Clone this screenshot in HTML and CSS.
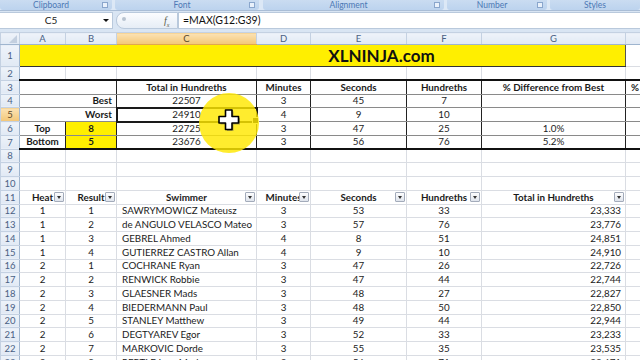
FILE: index.html
```html
<!DOCTYPE html>
<html>
<head>
<meta charset="utf-8">
<link rel="stylesheet" href="styles.css">
</head>
<body>
<div class="ribbon">
  <div class="group g-clip"><span>Clipboard</span><i class="launch"></i></div>
  <div class="group g-font"><span>Font</span><i class="launch"></i></div>
  <div class="group g-align"><span>Alignment</span><i class="launch"></i></div>
  <div class="group g-num"><span>Number</span><i class="launch"></i></div>
  <div class="group g-styles"><span>Styles</span></div>
</div>

<div class="formulabar">
  <div class="namebox"><span>C5</span><b class="caret"></b></div>
  <div class="fxbox"><i class="knob"></i><span class="fx">f<sub>x</sub></span></div>
  <div class="formula">=MAX(G12:G39)</div>
</div>

<div class="sheet">
  <table class="grid">
    <colgroup>
      <col class="w-rh"><col class="w-a"><col class="w-b"><col class="w-c"><col class="w-d">
      <col class="w-e"><col class="w-f"><col class="w-g"><col class="w-h">
    </colgroup>
    <tr class="colhead">
      <th class="corner"></th><th>A</th><th>B</th><th class="on">C</th><th>D</th><th>E</th><th>F</th><th>G</th><th>H</th>
    </tr>
    <tr class="r1">
      <th>1</th><td colspan="7" class="title">XLNINJA.com</td><td></td>
    </tr>
    <tr><th>2</th><td></td><td></td><td></td><td></td><td></td><td></td><td></td><td></td></tr>
    <tr class="box top">
      <th>3</th><td colspan="2"></td><td class="b">Total in Hundreths</td><td class="b">Minutes</td><td class="b">Seconds</td><td class="b">Hundreths</td><td class="b">% Difference from Best</td><td class="b l">% Diff</td>
    </tr>
    <tr class="box">
      <th>4</th><td colspan="2" class="b r">Best</td><td>22507</td><td>3</td><td>45</td><td>7</td><td></td><td></td>
    </tr>
    <tr class="box">
      <th class="on">5</th><td colspan="2" class="b r">Worst</td><td class="sel">24910</td><td>4</td><td>9</td><td>10</td><td></td><td></td>
    </tr>
    <tr class="box">
      <th>6</th><td class="b">Top</td><td class="b yel">8</td><td>22725</td><td>3</td><td>47</td><td>25</td><td>1.0%</td><td></td>
    </tr>
    <tr class="box bottom">
      <th>7</th><td class="b">Bottom</td><td class="b yel">5</td><td>23676</td><td>3</td><td>56</td><td>76</td><td>5.2%</td><td></td>
    </tr>
    <tr><th>8</th><td></td><td></td><td></td><td></td><td></td><td></td><td></td><td></td></tr>
    <tr><th>9</th><td></td><td></td><td></td><td></td><td></td><td></td><td></td><td></td></tr>
    <tr><th>10</th><td></td><td></td><td></td><td></td><td></td><td></td><td></td><td></td></tr>
    <tr class="list-head">
      <th>11</th>
      <td>Heat<span class="fb"></span></td>
      <td>Result<span class="fb"></span></td>
      <td>Swimmer<span class="fb"></span></td>
      <td>Minutes<span class="fb"></span></td>
      <td>Seconds<span class="fb"></span></td>
      <td>Hundreths<span class="fb"></span></td>
      <td>Total in Hundreths<span class="fb"></span></td>
      <td></td>
    </tr>
    <tr class="list"><th>12</th><td>1</td><td>1</td><td class="l">SAWRYMOWICZ Mateusz</td><td>3</td><td>53</td><td>33</td><td class="r">23,333</td><td></td></tr>
    <tr class="list"><th>13</th><td>1</td><td>2</td><td class="l">de ANGULO VELASCO Mateo</td><td>3</td><td>57</td><td>76</td><td class="r">23,776</td><td></td></tr>
    <tr class="list"><th>14</th><td>1</td><td>3</td><td class="l">GEBREL Ahmed</td><td>4</td><td>8</td><td>51</td><td class="r">24,851</td><td></td></tr>
    <tr class="list"><th>15</th><td>1</td><td>4</td><td class="l">GUTIERREZ CASTRO Allan</td><td>4</td><td>9</td><td>10</td><td class="r">24,910</td><td></td></tr>
    <tr class="list"><th>16</th><td>2</td><td>1</td><td class="l">COCHRANE Ryan</td><td>3</td><td>47</td><td>26</td><td class="r">22,726</td><td></td></tr>
    <tr class="list"><th>17</th><td>2</td><td>2</td><td class="l">RENWICK Robbie</td><td>3</td><td>47</td><td>44</td><td class="r">22,744</td><td></td></tr>
    <tr class="list"><th>18</th><td>2</td><td>3</td><td class="l">GLAESNER Mads</td><td>3</td><td>48</td><td>27</td><td class="r">22,827</td><td></td></tr>
    <tr class="list"><th>19</th><td>2</td><td>4</td><td class="l">BIEDERMANN Paul</td><td>3</td><td>48</td><td>50</td><td class="r">22,850</td><td></td></tr>
    <tr class="list"><th>20</th><td>2</td><td>5</td><td class="l">STANLEY Matthew</td><td>3</td><td>49</td><td>44</td><td class="r">22,944</td><td></td></tr>
    <tr class="list"><th>21</th><td>2</td><td>6</td><td class="l">DEGTYAREV Egor</td><td>3</td><td>52</td><td>33</td><td class="r">23,233</td><td></td></tr>
    <tr class="list"><th>22</th><td>2</td><td>7</td><td class="l">MARKOVIC Dorde</td><td>3</td><td>55</td><td>35</td><td class="r">23,535</td><td></td></tr>
    <tr class="list"><th>23</th><td>2</td><td>8</td><td class="l">PERTLE Ivan Marko</td><td>3</td><td>56</td><td>71</td><td class="r">23,671</td><td></td></tr>
  </table>

  <div class="spot"></div>
  <svg class="cursor" width="24" height="24" viewBox="0 0 24 24">
    <path d="M9 2.5H15.5V9H22V15.5H15.5V22H9V15.5H2.5V9H9Z" fill="#555" opacity="0.45"/>
    <path d="M7.5 1H14V7.5H20.5V14H14V20.5H7.5V14H1V7.5H7.5Z" fill="#fff" stroke="#000" stroke-width="1.6" stroke-linejoin="round"/>
  </svg>
</div>
</body>
</html>
```

FILE: styles.css
```css
*{
  margin:0;
  padding:0;
  box-sizing:border-box;
}

body{
  width:640px;
  height:360px;
  overflow:hidden;
  background:#fff;
  font-family:Lato, "Open Sans", sans-serif;
  color:#1b1b1b;
}

/* ribbon group captions (bottom edge of the ribbon) */
.ribbon{
  display:flex;
  gap:3px;
  height:10px;
  background:#dce8f6;
  overflow:hidden;
}
.group{
  position:relative;
  height:10px;
  background:linear-gradient(#cadcf1, #bcd3ee);
  border-radius:0 0 3px 3px;
  color:#4c78b5;
  font-size:8.5px;
  line-height:10px;
  text-align:center;
  padding-right:10px;
}
.g-clip{ width:112px; }
.g-font{ width:144px; }
.g-align{ width:181px; margin-left:1px; }
.g-num{ width:100px; }
.g-styles{ flex:1; padding-right:0; }
.launch{
  position:absolute;
  right:4px;
  top:2px;
  width:6px;
  height:6px;
  border:1px solid #8aa6cc;
  background:#e9f1fb;
}

/* name box + formula bar */
.formulabar{
  display:flex;
  height:22px;
  padding:1px 0 3px;
  background:#d9e5f3;
  border-top:1px solid #a9bdd6;
}
.namebox{
  position:relative;
  width:113px;
  background:#fff;
  border:1px solid #b9c9dc;
  border-left:none;
  font-size:10px;
  line-height:15px;
  padding-right:10px;
  text-align:center;
}
.caret{
  position:absolute;
  right:3px;
  top:6px;
  border-left:3px solid transparent;
  border-right:3px solid transparent;
  border-top:3px solid #111;
}
.fxbox{
  position:relative;
  width:62px;
  margin-left:3px;
  background:linear-gradient(#fbfcfe, #e6edf6);
  border:1px solid #b9c9dc;
  border-radius:8px 0 0 8px;
}
.knob{
  position:absolute;
  left:5px;
  top:4px;
  width:4px;
  height:4px;
  border-radius:50%;
  background:#b8c3d0;
}
.fx{
  position:absolute;
  left:47px;
  top:0;
  font-family:"Liberation Serif", serif;
  font-style:italic;
  font-size:10px;
  line-height:15px;
  color:#5b5b4a;
}
.fx sub{
  font-size:6px;
}
.formula{
  flex:1;
  background:#fff;
  border:1px solid #b9c9dc;
  border-right:none;
  padding-left:4px;
  font-size:10.5px;
  line-height:15px;
  color:#111;
}

/* worksheet */
.sheet{
  position:relative;
  width:640px;
  overflow:hidden;
}
.grid{
  border-collapse:collapse;
  table-layout:fixed;
  width:776px;
  font-size:9.8px;
}
.w-rh{ width:19px; }
.w-a{ width:46px; }
.w-b{ width:51px; }
.w-c{ width:140px; }
.w-d{ width:54px; }
.w-e{ width:96px; }
.w-f{ width:75px; }
.w-g{ width:144px; }
.w-h{ width:151px; }

.grid tr{
  height:13.75px;
}
.grid td{
  border:1px solid #dadde3;
  padding:0 2px;
  text-align:center;
  line-height:11px;
  white-space:nowrap;
  overflow:hidden;
}
.grid th{
  background:linear-gradient(#eef3fa, #e1e9f4);
  border:1px solid #c4d1e2;
  border-right-color:#9fb5cf;
  color:#4a6184;
  font-weight:normal;
  font-size:9.5px;
  line-height:11px;
  text-align:center;
}
.grid th.on{
  background:linear-gradient(#fbe2b4, #f3c778);
  color:#5c4a2a;
}

.colhead{
  height:12px !important;
}
.colhead th{
  border-bottom-color:#9fb5cf;
  border-right-color:#c4d1e2;
}
.colhead th.on{
  border-bottom-color:#e0a850;
}
.corner{
  position:relative;
}
.corner::after{
  content:"";
  position:absolute;
  right:2px;
  bottom:1px;
  border-left:8px solid transparent;
  border-bottom:8px solid #c3cfdf;
}

.r1{
  height:22px !important;
}
.title{
  background:#ffef00;
  border-bottom:1px solid #333 !important;
  border-right:1px solid #555 !important;
  font-size:17px;
  font-weight:bold;
  line-height:20px !important;
  padding-left:120px !important;
  color:#111;
}

/* summary block */
.box td{
  border-top:1px solid #8a8a8a;
  border-bottom:1px solid #8a8a8a;
  border-left:1px solid #222;
  border-right:1px solid #222;
}
.box.top td{
  border-top:2px solid #111;
}
.box.bottom td{
  border-bottom:2px solid #111;
}
.b{
  font-weight:bold;
}
.r{
  text-align:right !important;
  padding-right:4px !important;
}
.l{
  text-align:left !important;
  padding-left:5px !important;
}
.yel{
  background:#ffef00;
}
.sel{
  position:relative;
  overflow:visible !important;
  outline:2px solid #1a1a1a;
  outline-offset:-1px;
}
.sel::after{
  content:"";
  position:absolute;
  right:-3px;
  bottom:-3px;
  width:5px;
  height:5px;
  background:#111;
  border:1px solid #fff;
}

/* filtered list */
.list-head td{
  position:relative;
  font-weight:bold;
}
.fb{
  position:absolute;
  right:1px;
  top:1px;
  width:10px;
  height:10px;
  border:1px solid #a3abba;
  border-radius:1px;
  background:linear-gradient(#fdfdfe, #dfe4ec);
}
.fb::after{
  content:"";
  position:absolute;
  left:2px;
  top:3px;
  border-left:2.5px solid transparent;
  border-right:2.5px solid transparent;
  border-top:3px solid #333;
}

/* recorder cursor highlight */
.spot{
  position:absolute;
  left:199px;
  top:61px;
  width:60px;
  height:60px;
  border-radius:50%;
  background:rgba(255, 232, 0, 0.82);
}
.cursor{
  position:absolute;
  left:218px;
  top:77px;
}
```
